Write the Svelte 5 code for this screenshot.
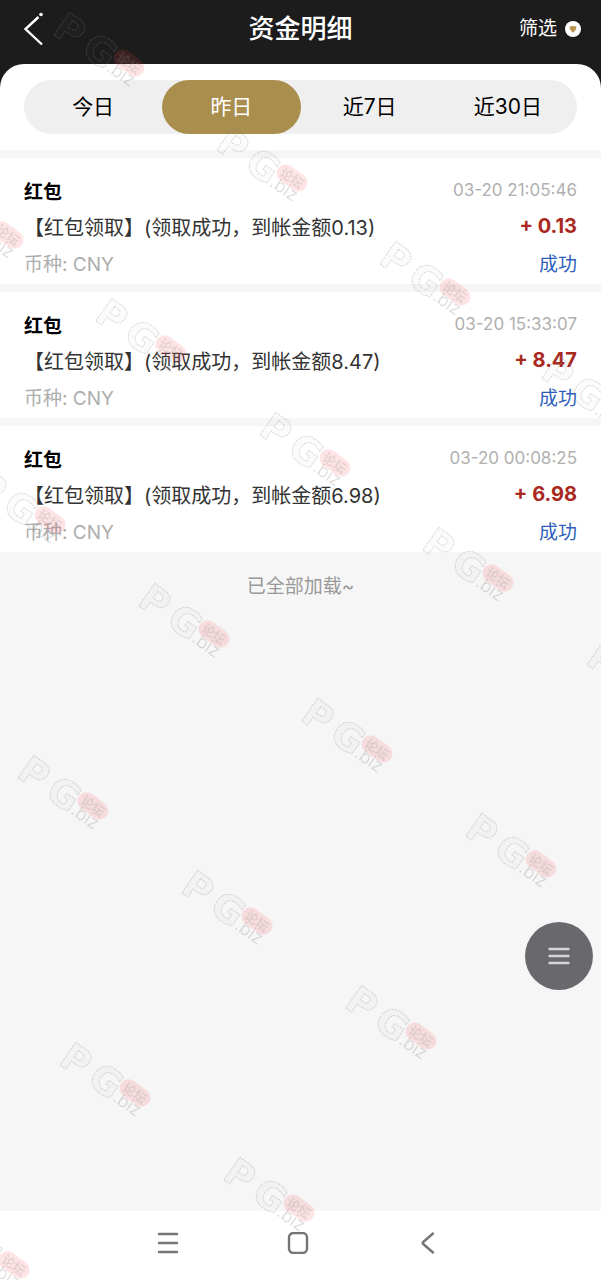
<script lang="ts">
  type Entry = {
    title: string;
    time: string;
    amount: string;
    currency: string;
    status: string;
  };

  const ranges = ["今日", "昨日", "近7日", "近30日"];

  const entries: Entry[] = [
    { title: "红包", time: "03-20 21:05:46", amount: "0.13", currency: "CNY", status: "成功" },
    { title: "红包", time: "03-20 15:33:07", amount: "8.47", currency: "CNY", status: "成功" },
    { title: "红包", time: "03-20 00:08:25", amount: "6.98", currency: "CNY", status: "成功" },
  ];

  // top left corner of each watermark
  const marks = [
    [52, 12], [215, 127], [378, 241], [-69, 184], [94, 298], [258, 412],
    [540, 355], [-27, 469], [421, 527], [137, 583], [585, 642], [300, 698],
    [16, 755], [464, 813], [180, 870], [344, 985], [58, 1042], [222, 1157],
    [-63, 1214],
  ];

  let active = $state(1);
</script>

<div class="page">
  <header class="topbar">
    <button class="back" aria-label="返回">
      <svg width="24" height="36" viewBox="0 0 24 36">
        <path d="M18.5 6 L5.5 18 L22 33.5" fill="none" stroke="#fff" stroke-width="2.4" />
        <circle cx="21" cy="3.5" r="1.8" fill="#fff" />
      </svg>
    </button>
    <h1>资金明细</h1>
    <button class="filter">
      筛选
      <svg width="16" height="16" viewBox="0 0 16 16">
        <circle cx="8" cy="8" r="8" fill="#fff" />
        <path d="M4.6 5.4 Q8 4.4 11.4 5.4 Q12 7.4 8.6 11.2 Q8 11.8 7.4 11.2 Q4 7.4 4.6 5.4 Z" fill="#b9934b" />
      </svg>
    </button>
  </header>

  <main>
    <div class="sheet">
      <div class="tabs" role="tablist">
        {#each ranges as range, i}
          <button
            class="tab"
            class:active={active === i}
            role="tab"
            aria-selected={active === i}
            onclick={() => (active = i)}
          >
            {range}
          </button>
        {/each}
      </div>
    </div>

    <ul class="list">
      {#each entries as entry}
        <li class="entry">
          <div class="row">
            <strong class="title">{entry.title}</strong>
            <time class="time">{entry.time}</time>
          </div>
          <div class="row">
            <span class="desc">【红包领取】(领取成功，到帐金额{entry.amount})</span>
            <span class="amount">+ {entry.amount}</span>
          </div>
          <div class="row">
            <span class="currency">币种: {entry.currency}</span>
            <span class="status">{entry.status}</span>
          </div>
        </li>
      {/each}
    </ul>

    <p class="end">已全部加载~</p>
  </main>

  <button class="float" aria-label="菜单">
    <svg width="22" height="18" viewBox="0 0 22 18">
      <path d="M1.5 2 H20.5 M1.5 9 H20.5 M1.5 16 H20.5" stroke="#d6d6d8" stroke-width="2.4" stroke-linecap="round" />
    </svg>
  </button>

  <nav class="sysbar">
    <button aria-label="最近任务">
      <svg width="22" height="22" viewBox="0 0 22 22">
        <path d="M2 2 H20 M2 11 H20 M2 20 H20" />
      </svg>
    </button>
    <button aria-label="主屏幕">
      <svg width="22" height="22" viewBox="0 0 22 22">
        <rect x="2" y="1" width="18" height="20" rx="4.5" />
      </svg>
    </button>
    <button aria-label="后退">
      <svg width="22" height="22" viewBox="0 0 22 22">
        <path d="M16 1.5 L6.2 10 Q5.2 11 6.2 12 L16 20.5" />
      </svg>
    </button>
  </nav>

  <svg class="watermark" aria-hidden="true">
    {#each marks as [x, y]}
      <g transform="translate({x} {y})">
        <g transform="translate(-1 21) rotate(35)">
          <text class="outline" x="0 35" y="0">PG</text>
          <text class="biz" x="66" y="-1">.biz</text>
        </g>
        <g transform="translate(77 51) rotate(36)">
          <rect x="-17" y="-9" width="34" height="18" rx="9" fill="#ff4b55" fill-opacity="0.15" />
          <text class="forum" x="0" y="5">论坛</text>
        </g>
      </g>
    {/each}
  </svg>
</div>

<style>
  :global(body) {
    margin: 0;
    background: #f6f6f6;
  }

  .page {
    position: relative;
    display: flex;
    flex-direction: column;
    min-height: 100vh;
    overflow: hidden;
    background: #f6f6f6;
    color: #000;
    font-family: Inter, "Noto Sans CJK SC", sans-serif;
  }

  button {
    border: 0;
    padding: 0;
    background: none;
    color: inherit;
    font: inherit;
    cursor: pointer;
  }

  svg {
    display: block;
  }

  .topbar {
    display: grid;
    grid-template-columns: 1fr auto 1fr;
    align-items: center;
    height: 58px;
    padding: 0 20px 30px;
    margin-bottom: -24px;
    background: #1c1c1c;
    color: #fff;
  }

  .back {
    justify-self: start;
  }

  h1 {
    margin: 0;
    font-size: 26px;
    font-weight: 500;
    line-height: 36px;
  }

  .filter {
    display: flex;
    align-items: center;
    justify-self: end;
    gap: 8px;
    font-size: 19px;
    line-height: 28px;
  }

  main {
    flex: 1;
  }

  .sheet {
    padding: 16px 24px;
    border-radius: 24px 24px 0 0;
    background: #fff;
  }

  .tabs {
    display: flex;
    border-radius: 27px;
    background: #efefef;
  }

  .tab {
    flex: 1;
    height: 54px;
    padding-bottom: 4px;
    border-radius: 27px;
    font-size: 21px;
  }

  .tab.active {
    background: #a98e4e;
    color: #fff;
  }

  .list {
    display: flex;
    flex-direction: column;
    gap: 8px;
    margin: 8px 0 0;
    padding: 0;
    list-style: none;
  }

  .entry {
    padding: 14px 24px 4px;
    background: #fff;
  }

  .row {
    display: flex;
    align-items: center;
    justify-content: space-between;
    height: 36px;
    font-size: 19px;
    white-space: nowrap;
  }

  .title {
    font-weight: 700;
  }

  .time {
    color: #b0b0b0;
    font-size: 17px;
  }

  .desc {
    color: #333;
    font-size: 20px;
  }

  .amount {
    color: #a92820;
    font-size: 20px;
    font-weight: 700;
  }

  .currency {
    color: #adadad;
  }

  .status {
    color: #2e5fbd;
  }

  .end {
    margin: 21px 0;
    color: #999;
    font-size: 19px;
    line-height: 28px;
    text-align: center;
  }

  .float {
    position: fixed;
    right: 8px;
    bottom: 290px;
    display: flex;
    align-items: center;
    justify-content: center;
    width: 68px;
    height: 68px;
    border-radius: 50%;
    background: #69696d;
  }

  .sysbar {
    display: flex;
    justify-content: center;
    gap: 108px;
    padding: 21px 6px 26px 0;
    background: #fff;
  }

  .sysbar svg {
    fill: none;
    stroke: #757575;
    stroke-width: 2.4;
    stroke-linecap: round;
    stroke-linejoin: round;
  }

  .watermark {
    position: absolute;
    inset: 0;
    width: 100%;
    height: 100%;
    pointer-events: none;
  }

  .outline {
    fill: #888;
    fill-opacity: 0.03;
    stroke: #888;
    stroke-opacity: 0.3;
    stroke-dasharray: 2 1;
    font-family: "DejaVu Sans", sans-serif;
    font-size: 38px;
    font-weight: 700;
  }

  .biz {
    fill: #888;
    fill-opacity: 0.3;
    font-size: 18px;
    font-weight: 300;
  }

  .forum {
    fill: #888;
    fill-opacity: 0.22;
    font-size: 13px;
    font-weight: 700;
    text-anchor: middle;
  }
</style>
